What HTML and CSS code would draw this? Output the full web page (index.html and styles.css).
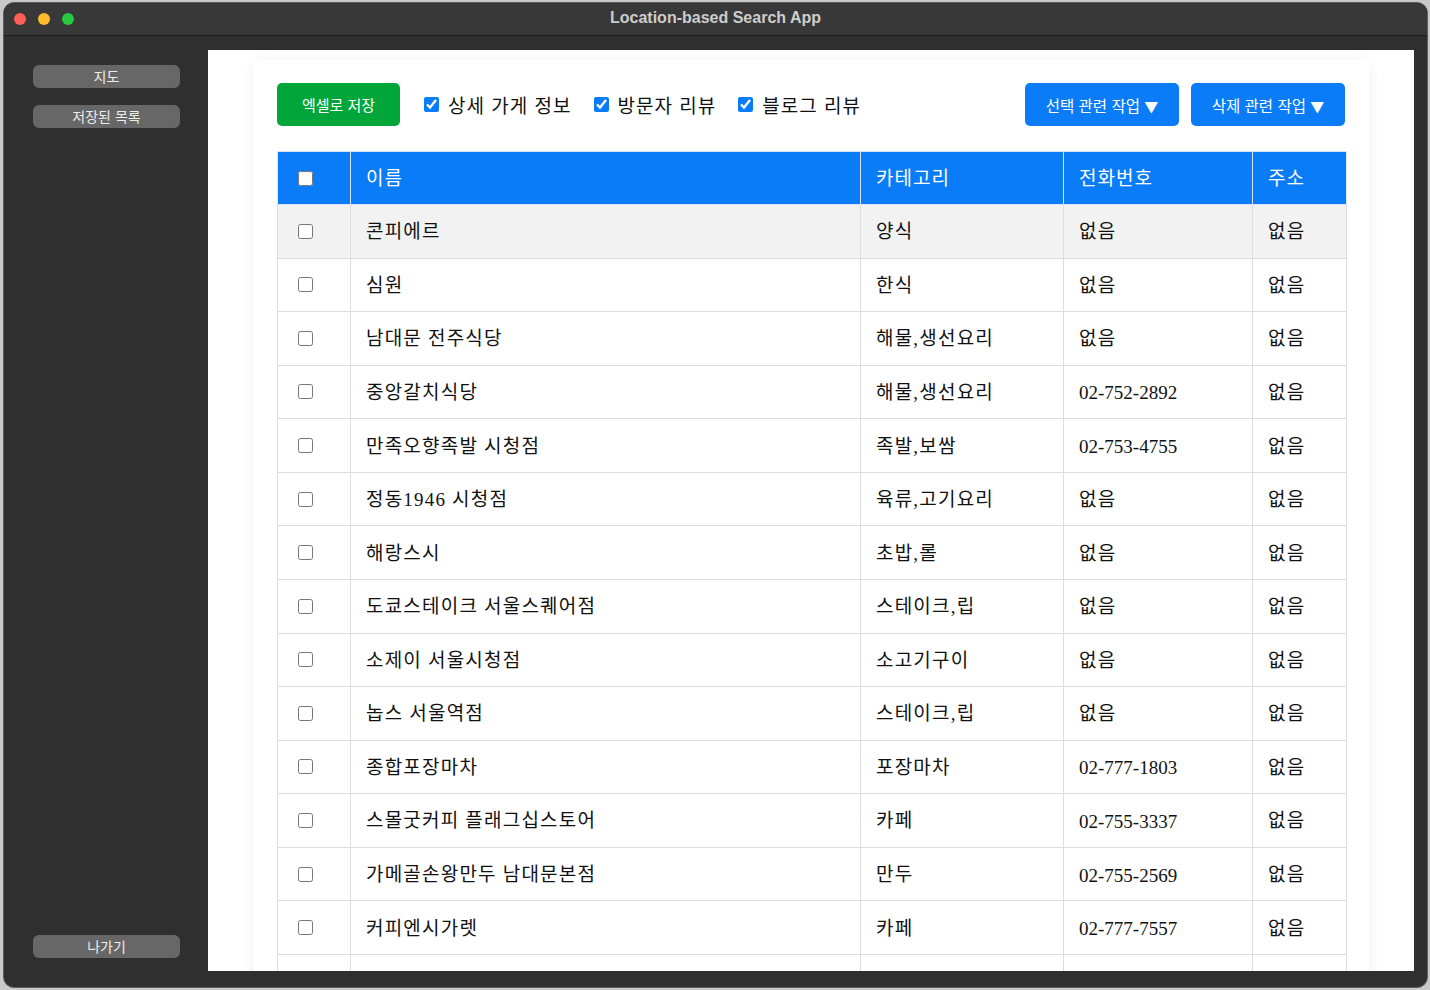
FILE: index.html
```html
<!DOCTYPE html>
<html lang="ko">
<head>
<meta charset="utf-8">
<title>Location-based Search App</title>
<link rel="stylesheet" href="styles.css">
</head>
<body>
<div class="window">
  <div class="titlebar">
    <div class="lights">
      <span class="light red"></span>
      <span class="light yellow"></span>
      <span class="light green"></span>
    </div>
    <div class="title">Location-based Search App</div>
    <div></div>
  </div>
  <div class="main">
    <aside class="sidebar">
      <button class="side-btn">지도</button>
      <button class="side-btn">저장된 목록</button>
      <button class="side-btn exit">나가기</button>
    </aside>
    <div class="content-wrap">
      <div class="content">
        <div class="card">
          <div class="toolbar">
            <button class="btn btn-green">엑셀로 저장</button>
            <label class="opt"><input type="checkbox" checked><span>상세 가게 정보</span></label>
            <label class="opt"><input type="checkbox" checked><span>방문자 리뷰</span></label>
            <label class="opt"><input type="checkbox" checked><span>블로그 리뷰</span></label>
            <div class="actions">
              <button class="btn btn-blue">선택 관련 작업 <span class="caret">▼</span></button>
              <button class="btn btn-blue">삭제 관련 작업 <span class="caret">▼</span></button>
            </div>
          </div>
          <table class="results">
            <colgroup>
              <col class="c-check">
              <col class="c-name">
              <col class="c-cat">
              <col class="c-phone">
              <col class="c-addr">
            </colgroup>
            <thead>
              <tr>
                <th class="chk"><input type="checkbox"></th>
                <th>이름</th>
                <th>카테고리</th>
                <th>전화번호</th>
                <th>주소</th>
              </tr>
            </thead>
            <tbody>
              <tr class="hover"><td class="chk"><input type="checkbox"></td><td>콘피에르</td><td>양식</td><td>없음</td><td>없음</td></tr>
              <tr><td class="chk"><input type="checkbox"></td><td>심원</td><td>한식</td><td>없음</td><td>없음</td></tr>
              <tr><td class="chk"><input type="checkbox"></td><td>남대문 전주식당</td><td>해물,생선요리</td><td>없음</td><td>없음</td></tr>
              <tr><td class="chk"><input type="checkbox"></td><td>중앙갈치식당</td><td>해물,생선요리</td><td class="num">02-752-2892</td><td>없음</td></tr>
              <tr><td class="chk"><input type="checkbox"></td><td>만족오향족발 시청점</td><td>족발,보쌈</td><td class="num">02-753-4755</td><td>없음</td></tr>
              <tr><td class="chk"><input type="checkbox"></td><td>정동1946 시청점</td><td>육류,고기요리</td><td>없음</td><td>없음</td></tr>
              <tr><td class="chk"><input type="checkbox"></td><td>해랑스시</td><td>초밥,롤</td><td>없음</td><td>없음</td></tr>
              <tr><td class="chk"><input type="checkbox"></td><td>도쿄스테이크 서울스퀘어점</td><td>스테이크,립</td><td>없음</td><td>없음</td></tr>
              <tr><td class="chk"><input type="checkbox"></td><td>소제이 서울시청점</td><td>소고기구이</td><td>없음</td><td>없음</td></tr>
              <tr><td class="chk"><input type="checkbox"></td><td>놉스 서울역점</td><td>스테이크,립</td><td>없음</td><td>없음</td></tr>
              <tr><td class="chk"><input type="checkbox"></td><td>종합포장마차</td><td>포장마차</td><td class="num">02-777-1803</td><td>없음</td></tr>
              <tr><td class="chk"><input type="checkbox"></td><td>스몰굿커피 플래그십스토어</td><td>카페</td><td class="num">02-755-3337</td><td>없음</td></tr>
              <tr><td class="chk"><input type="checkbox"></td><td>가메골손왕만두 남대문본점</td><td>만두</td><td class="num">02-755-2569</td><td>없음</td></tr>
              <tr><td class="chk"><input type="checkbox"></td><td>커피엔시가렛</td><td>카페</td><td class="num">02-777-7557</td><td>없음</td></tr>
              <tr><td class="chk"><input type="checkbox"></td><td>커피빈 서울시청역점</td><td>한식</td><td>없음</td><td>없음</td></tr>
            </tbody>
          </table>
        </div>
      </div>
    </div>
  </div>
</div>
</body>
</html>
```

FILE: styles.css
```css
html, body {
  margin: 0;
  height: 100%;
  overflow: hidden;
  background: #c9c9c9;
}

.window {
  margin: 2px 0 0 3px;
  width: 1425px;
  height: 986px;
  box-sizing: border-box;
  border: 1px solid #5c5c5c;
  border-radius: 11px;
  background: #2f2f2f;
  display: flex;
  flex-direction: column;
  overflow: hidden;
}

.titlebar {
  height: 32px;
  flex: none;
  background: #383838;
  border-bottom: 1px solid #1c1c1c;
  display: grid;
  grid-template-columns: 1fr auto 1fr;
  align-items: center;
}

.lights {
  display: flex;
  gap: 12px;
  padding-left: 10px;
}

.light {
  width: 12px;
  height: 12px;
  border-radius: 50%;
}
.light.red { background: #fe5f57; }
.light.yellow { background: #febc2e; }
.light.green { background: #28c840; }

.title {
  font-family: "Liberation Sans", "Noto Sans", sans-serif;
  font-weight: 700;
  font-size: 16px;
  color: #cdcdcd;
  padding-bottom: 3px;
}

.main {
  flex: 1;
  display: flex;
  min-height: 0;
}

.sidebar {
  width: 204px;
  flex: none;
  box-sizing: border-box;
  padding: 29px 0 29px 29px;
  display: flex;
  flex-direction: column;
  gap: 17px;
}

.side-btn {
  width: 147px;
  height: 23px;
  border: none;
  border-radius: 6px;
  background: #676767;
  color: #ececec;
  font-family: "Noto Sans CJK KR", "Noto Sans", sans-serif;
  font-size: 14px;
  line-height: 23px;
  padding: 0;
}

.side-btn.exit {
  margin-top: auto;
}

.content-wrap {
  flex: 1;
  display: flex;
  padding: 14px 13px 16px 0;
  min-width: 0;
}

.content {
  flex: 1;
  background: #ffffff;
  overflow: hidden;
  padding: 10px 45px 0 45px;
}

.card {
  background: #fff;
  border-radius: 8px;
  box-shadow: 0 2px 14px rgba(0, 0, 0, 0.07);
  padding: 23px 24px;
}

.toolbar {
  display: flex;
  align-items: center;
  gap: 22px;
  height: 43px;
}

.btn {
  height: 43px;
  border: none;
  border-radius: 5px;
  color: #fff;
  font-family: "Noto Sans CJK KR", "Noto Sans", sans-serif;
  font-size: 15.5px;
  padding: 0;
}

.caret {
  font-size: 14px;
}

.btn-green {
  width: 123px;
  background: #00a63a;
  font-size: 15px;
  margin-right: 2px;
}

.btn-blue {
  width: 154px;
  background: #0a7cf8;
}

.opt {
  display: flex;
  align-items: center;
  gap: 9px;
  font-family: "Noto Sans CJK KR", sans-serif;
  font-size: 19px;
  letter-spacing: 1px;
  color: #111;
}

.opt input {
  width: 15px;
  height: 15px;
  margin: 0;
  accent-color: #0a7cf8;
}

.actions {
  margin-left: auto;
  display: flex;
  gap: 12px;
}

.results {
  margin-top: 25px;
  width: 100%;
  border-collapse: collapse;
  table-layout: fixed;
  border: 1px solid #dddddd;
}

.c-check { width: 73px; }
.c-name { width: 510px; }
.c-cat { width: 203px; }
.c-phone { width: 189px; }
.c-addr { width: 94px; }

.results th {
  background: #0a7cf8;
  color: #fff;
  font-family: "Noto Sans CJK KR", sans-serif;
  font-weight: 400;
  font-size: 19px;
  letter-spacing: 1px;
  text-align: left;
  height: 53px;
  padding: 0 15px 3px;
  border: 1px solid #d6e4f5;
  box-sizing: border-box;
}

.results td {
  font-family: "Liberation Serif", "Noto Sans CJK KR", serif;
  font-size: 19px;
  letter-spacing: 1.2px;
  color: #111;
  height: 53.57px;
  padding: 0 15px 3px;
  border: 1px solid #dddddd;
  box-sizing: border-box;
  white-space: nowrap;
}

.results td.num {
  letter-spacing: 0;
  padding-top: 3px;
  padding-bottom: 0;
}

.results .chk {
  padding: 0 0 0 20px;
}

.results .chk input {
  width: 15px;
  height: 15px;
  margin: 0;
  display: block;
}

.results tr.hover td {
  background: #f2f2f2;
}
```
